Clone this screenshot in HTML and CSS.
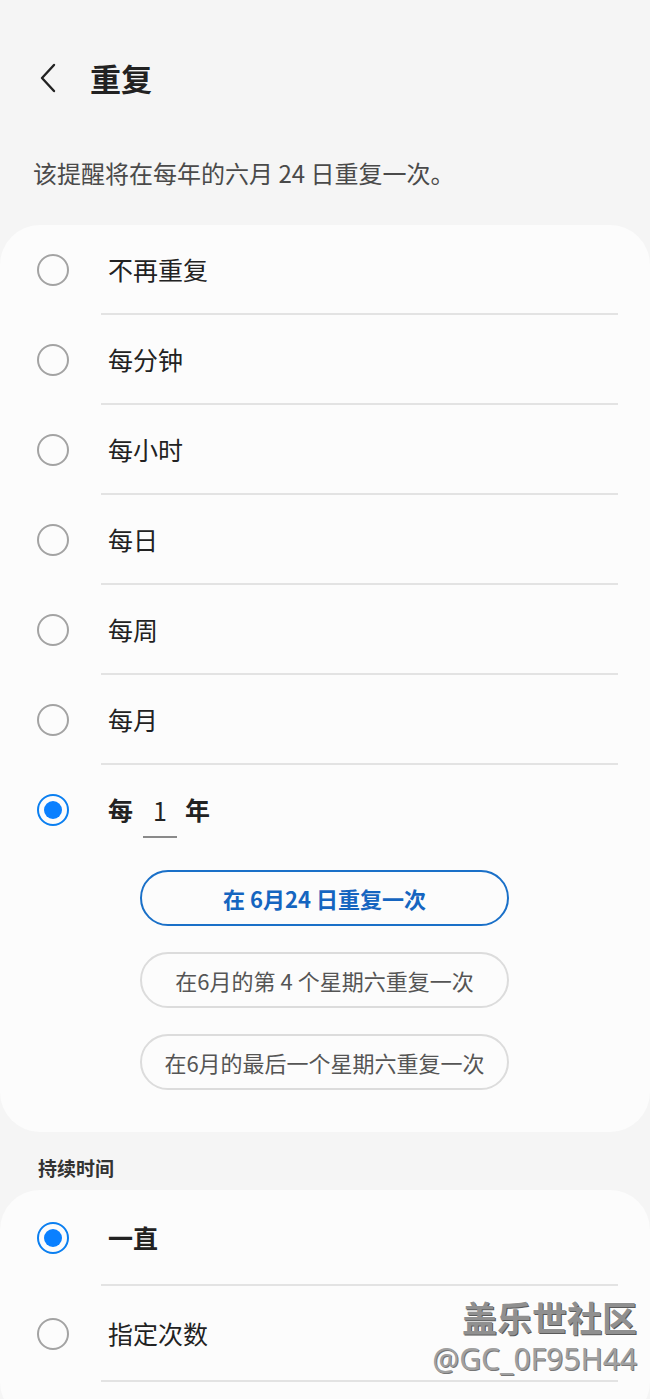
FILE: index.html
```html
<!DOCTYPE html>
<html lang="zh-CN">
<head>
    <meta charset="UTF-8">
    <meta name="viewport" content="width=device-width, initial-scale=1.0">
    <title>重复</title>
    <link rel="stylesheet" href="styles.css">
</head>
<body>
    <div class="top-bar">
        <svg class="back" width="24" height="32" viewBox="0 0 24 32">
            <path d="M17 3 L5 16 L17 29" fill="none" stroke="#222" stroke-width="2.4" stroke-linecap="round" stroke-linejoin="round"/>
        </svg>
        <h1>重复</h1>
    </div>

    <p class="summary">该提醒将在每年的六月 24 日重复一次。</p>

    <!-- Repeat options -->
    <div class="card">
        <div class="option">
            <div class="radio-cell"><span class="radio"></span></div>
            <div class="option-body">不再重复</div>
        </div>
        <div class="option">
            <div class="radio-cell"><span class="radio"></span></div>
            <div class="option-body">每分钟</div>
        </div>
        <div class="option">
            <div class="radio-cell"><span class="radio"></span></div>
            <div class="option-body">每小时</div>
        </div>
        <div class="option">
            <div class="radio-cell"><span class="radio"></span></div>
            <div class="option-body">每日</div>
        </div>
        <div class="option">
            <div class="radio-cell"><span class="radio"></span></div>
            <div class="option-body">每周</div>
        </div>
        <div class="option">
            <div class="radio-cell"><span class="radio"></span></div>
            <div class="option-body">每月</div>
        </div>
        <div class="option last">
            <div class="radio-cell"><span class="radio checked"></span></div>
            <div class="option-body bold">
                <span>每</span>
                <span class="year-input">1</span>
                <span>年</span>
            </div>
        </div>
        <div class="choices">
            <button class="choice active">在 6月24 日重复一次</button>
            <button class="choice">在6月的第 4 个星期六重复一次</button>
            <button class="choice">在6月的最后一个星期六重复一次</button>
        </div>
    </div>

    <div class="section-label">持续时间</div>

    <!-- Duration -->
    <div class="card duration">
        <div class="option">
            <div class="radio-cell"><span class="radio checked"></span></div>
            <div class="option-body bold">一直</div>
        </div>
        <div class="option">
            <div class="radio-cell"><span class="radio"></span></div>
            <div class="option-body">指定次数</div>
        </div>
    </div>

    <div class="watermark">
        <div class="wm-title">盖乐世社区</div>
        <div class="wm-id">@GC_0F95H44</div>
    </div>
</body>
</html>
```

FILE: styles.css
```css
* { margin: 0; padding: 0; box-sizing: border-box; }
body {
    font-family: "Noto Sans CJK SC", "Noto Sans", sans-serif;
    background: #f5f5f5;
    color: #222;
    width: 650px;
    min-height: 1399px;
    position: relative;
    overflow: hidden;
}
.top-bar {
    display: flex;
    align-items: center;
    height: 56px;
    margin-top: 50px;
    padding-left: 37px;
}
.back { display: block; }
h1 { font-size: 31px; font-weight: bold; margin-left: 29px; line-height: 56px; color: #222; }
.summary {
    font-size: 24px;
    line-height: 32px;
    color: #4a4a4a;
    margin: 51px 0 36px 33px;
}
.card {
    background: #fcfcfc;
    border-radius: 40px;
    padding-bottom: 42px;
}
.option { display: flex; height: 90px; }
.radio-cell { width: 101px; display: flex; align-items: center; padding-left: 37px; }
.radio {
    width: 32px;
    height: 32px;
    border-radius: 50%;
    border: 2px solid #a3a3a3;
    display: flex;
    align-items: center;
    justify-content: center;
}
.radio.checked { border-color: #0b7ff0; }
.radio.checked::after {
    content: "";
    width: 18px;
    height: 18px;
    border-radius: 50%;
    background: #0a80ff;
}
.option-body {
    flex: 1;
    display: flex;
    align-items: center;
    padding-left: 7px;
    margin-right: 32px;
    font-size: 25px;
    border-bottom: 2px solid #e3e3e3;
}
.option.last .option-body { border-bottom: none; height: 88px; }
.option-body.bold { font-weight: bold; }
.year-input {
    display: inline-block;
    width: 34px;
    margin: 12px 8px 0 10px;
    padding-bottom: 8px;
    text-align: center;
    font-weight: normal;
    border-bottom: 2px solid #8a8a8a;
}
.choices {
    display: flex;
    flex-direction: column;
    gap: 26px;
    padding-left: 140px;
    margin-top: 15px;
}
.choice {
    width: 369px;
    height: 56px;
    border-radius: 28px;
    border: 2px solid #dcdcdc;
    background: transparent;
    font-family: inherit;
    font-size: 22px;
    color: #555;
}
.choice.active {
    border-color: #1a70c8;
    color: #1565c0;
    font-weight: bold;
}
.section-label {
    font-size: 19px;
    font-weight: bold;
    color: #333;
    line-height: 26px;
    margin: 23px 0 9px 38px;
}
.duration { padding-bottom: 40px; }
.duration .option { height: 96px; }
.watermark {
    position: absolute;
    right: 13px;
    top: 1295px;
    text-align: right;
    color: #909090;
    text-shadow: 1px 1px 0 #5a5a5a, -1px -1px 0 #fff;
}
.wm-title { font-size: 35px; font-weight: bold; line-height: 44px; }
.wm-id { font-family: "Noto Sans", sans-serif; font-size: 30px; line-height: 40px; color: #a0a0a0; text-shadow: 1px 1px 0 #777; }
```
